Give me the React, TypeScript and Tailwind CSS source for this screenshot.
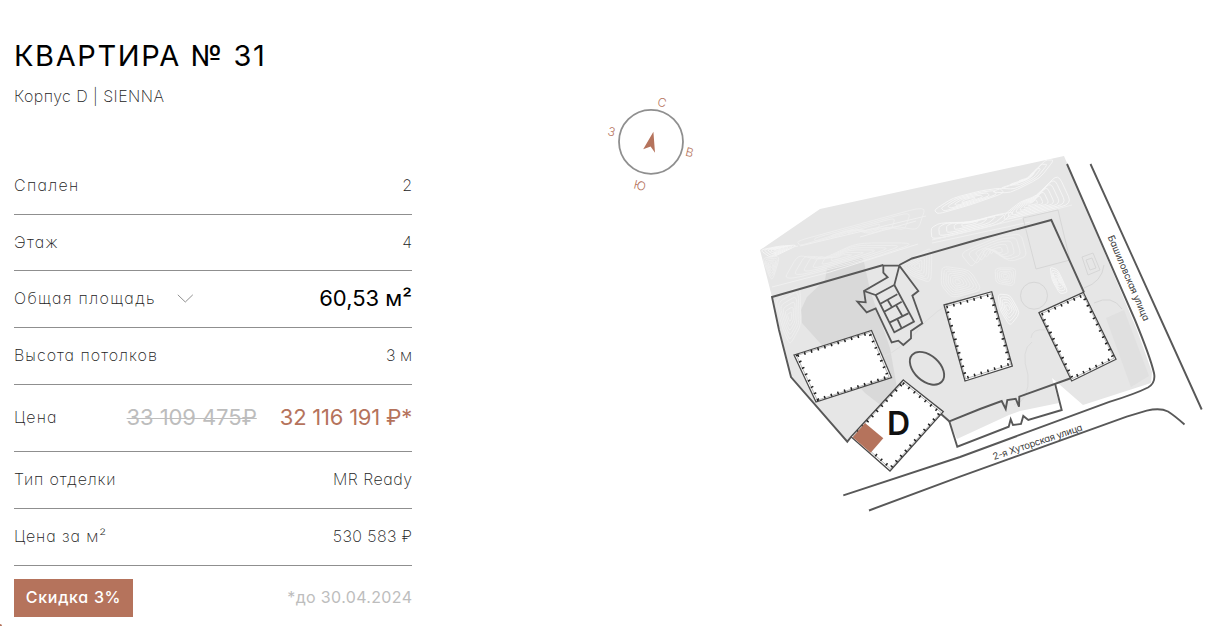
import type { ReactNode } from "react";

type Point = [number, number];

interface Row {
  label: ReactNode;
  value: ReactNode;
  height: string;
}

const rows: Row[] = [
  {
    label: <span className="tracking-[1.3px]">Спален</span>,
    value: <span>2</span>,
    height: "h-[57px]",
  },
  {
    label: <span className="tracking-[1.3px]">Этаж</span>,
    value: <span>4</span>,
    height: "h-14",
  },
  {
    label: (
      <button className="flex items-center gap-[21px]">
        <span className="tracking-[1.35px]">Общая площадь</span>
        <svg width="17" height="9" viewBox="0 0 17 9" fill="none">
          <path d="M0.8 0.8 8.3 8 15.8 0.8" stroke="#8f8f8f" />
        </svg>
      </button>
    ),
    value: <span className="text-[22px] font-normal text-black">60,53 м²</span>,
    height: "h-[57px]",
  },
  {
    label: <span className="tracking-[1px]">Высота потолков</span>,
    value: <span>3 м</span>,
    height: "h-[57px]",
  },
  {
    label: <span className="tracking-[1.2px]">Цена</span>,
    value: (
      <span className="flex text-[22px] font-normal">
        <s className="mr-[23px] tracking-[-0.1px] text-[#bdbdbd] decoration-1">33 109 475₽</s>
        <span className="tracking-[-0.22px] text-[#b5735c]">32 116 191 ₽*</span>
      </span>
    ),
    height: "h-[67px]",
  },
  {
    label: <span className="tracking-[0.85px]">Тип отделки</span>,
    value: <span className="-mr-[0.5px] tracking-[0.5px]">MR Ready</span>,
    height: "h-[57px]",
  },
  {
    label: <span className="tracking-[0.9px]">Цена за м²</span>,
    value: <span className="-mr-[0.4px] tracking-[0.4px]">530 583 ₽</span>,
    height: "h-[57px]",
  },
];

const buildings: Point[][] = [
  [[794, 355], [871.5, 330.5], [891.5, 377.5], [816, 402]],
  [[944, 305], [991.7, 291.7], [1012.3, 366], [965, 381]],
  [[1039, 312.7], [1083.3, 292.3], [1116, 359.3], [1071.7, 381]],
  [[903.3, 380], [943.3, 411.7], [890, 471], [851, 436.7]],
];

const contours: { points: Point[]; steps: number; bright?: boolean }[] = [
  { points: [[760, 250], [780, 246], [798, 245], [771, 258]], steps: 5, bright: true },
  { points: [[762, 258], [780, 256], [772, 282]], steps: 5 },
  { points: [[797, 241], [860, 224], [926, 206], [918, 230], [893, 226], [870, 234], [852, 229], [800, 246]], steps: 4 },
  { points: [[783, 281], [798, 255], [820, 260], [857, 243], [916, 243], [866, 260]], steps: 6 },
  { points: [[934, 210], [953, 198], [980, 191], [1000, 188], [1004, 193], [970, 205], [938, 214]], steps: 5, bright: true },
  { points: [[990, 192], [1028, 180], [1045, 160], [1054, 160], [1040, 178], [1010, 193]], steps: 4, bright: true },
  { points: [[931, 228], [940, 223], [970, 222], [1000, 214], [1014, 212], [1000, 224], [932, 240]], steps: 5, bright: true },
  { points: [[1005, 214], [1020, 202], [1036, 196], [1058, 174], [1072, 204], [1030, 214], [1004, 220]], steps: 7, bright: true },
  { points: [[898, 266], [912, 258], [932, 247], [931, 283], [912, 276]], steps: 6 },
  { points: [[942, 266], [970, 270], [982, 290], [952, 298], [941, 285]], steps: 7 },
  { points: [[960, 253], [1000, 236], [1021, 234], [1027, 256], [1010, 262], [985, 246], [972, 268]], steps: 5 },
  { points: [[995, 268], [1016, 268], [1014, 286], [996, 283]], steps: 5 },
  { points: [[998, 294], [1010, 295], [1020, 313], [1010, 326], [1000, 310]], steps: 5, bright: true },
  { points: [[1050, 267], [1058, 270], [1068, 292], [1060, 294], [1052, 280]], steps: 5, bright: true },
  { points: [[775, 300], [800, 285], [801, 325], [790, 345], [783, 330]], steps: 6 },
];

const toPath = (points: Point[]) => points.map((p) => p.join(",")).join(" ");

const middle = (a: Point, b: Point): Point => [(a[0] + b[0]) / 2, (a[1] + b[1]) / 2];

const center = (points: Point[]): Point => [
  points.reduce((sum, p) => sum + p[0], 0) / points.length,
  points.reduce((sum, p) => sum + p[1], 0) / points.length,
];

const scale = (points: Point[], k: number): Point[] => {
  const [cx, cy] = center(points);
  return points.map(([x, y]) => [cx + (x - cx) * k, cy + (y - cy) * k]);
};

// closed outline with slightly rounded corners
const softPath = (points: Point[]) => {
  const parts = points.map((p, i) => {
    const prev = points[(i + points.length - 1) % points.length];
    const next = points[(i + 1) % points.length];
    const from = middle(p, middle(p, prev));
    const to = middle(p, middle(p, next));
    return `${i === 0 ? "M" : "L"}${from.join(" ")}Q${p.join(" ")} ${to.join(" ")}`;
  });
  return parts.join("") + "Z";
};

const Contour = ({ points, steps, bright }: { points: Point[]; steps: number; bright?: boolean }) => (
  <g fill="none" stroke={bright ? "#f6f6f6" : "#eeeeee"} strokeWidth="0.9" strokeLinejoin="round">
    {Array.from({ length: steps }, (_, i) => (
      <path key={i} d={softPath(scale(points, 1 - i / steps))} />
    ))}
  </g>
);

const Building = ({ points }: { points: Point[] }) => (
  <g strokeLinejoin="miter">
    <polygon points={toPath(points)} fill="#fff" stroke="#4a4a4a" strokeWidth="1.3" />
    <polygon points={toPath(scale(points, 0.95))} fill="none" stroke="#888" strokeWidth="0.6" />
    <polygon
      points={toPath(scale(points, 0.93))}
      fill="none"
      stroke="#222"
      strokeWidth="2.8"
      strokeDasharray="1.5 5.5"
    />
  </g>
);

const Compass = () => (
  <g>
    <circle cx="651" cy="141.8" r="32" fill="none" stroke="#8f8f8f" strokeWidth="1.8" />
    <path d="M653.4 131.7 655 152.7 650.6 146.4 643.2 149.3Z" fill="#b5735c" />
    <g fill="#b5735c" fontSize="12" fontWeight="300" textAnchor="middle">
      <text transform="translate(661 106.6) rotate(14)">С</text>
      <text transform="translate(610.5 136) rotate(14)">З</text>
      <text transform="translate(688.5 156.5) rotate(14)">В</text>
      <text transform="translate(638.8 189.8) rotate(14)">Ю</text>
    </g>
  </g>
);

const SitePlan = () => (
  <svg
    width="632"
    height="626"
    viewBox="600 0 632 626"
    className="block shrink-0"
    fontFamily="Inter, 'Liberation Sans', sans-serif"
  >
    <Compass />

    {/* territory */}
    <path
      d="M760 250 820 209 1064 156 1067 163 1137 330 1152 372 1151 383 1083 405 1052 378 1059 403 1020 411 1009 415 957 439 949 421 941 414 903 381 847 441 791 377 772 297Z"
      fill="#e6e6e6"
    />
    <path
      d="M827 268 862 257 864 262 870 290 890 348 897 388 883 407 865 393 802 323 801 310 807 297 825 280Z"
      fill="#d9d9d9"
    />
    {contours.map((contour, i) => (
      <Contour key={i} {...contour} />
    ))}
    <g fill="none" stroke="#f0f0f0" strokeWidth="1">
      <path d="M772 287 830 272 918 244M932 240 1023 218 1072 205M932 243 1030 222M800 246 926 216" />
      <path d="M860 237 916 221M770 252 798 246" />
    </g>
    <g fill="none" stroke="#d6d6d6" strokeWidth="1">
      <circle cx="1034" cy="295.7" r="13.5" />
      <path d="M1023 218 1058 210 1070 260 1036 269Z" />
      <path d="M1082 257 1093 253 1100 270 1088 275ZM1086 260 1092 258 1096 268 1090 270Z" />
      <path d="M1104 265Q1102 282 1084 288M1094 303Q1112 294 1122 309" />
      <path d="M880 358Q903 350 925 322 950 298 980 292" stroke="#dedede" />
      <path d="M1031 338Q1032 328 1046 330M1014 405Q1030 400 1028 375 1020 350 1032 342" stroke="#dcdcdc" />
    </g>
    <path d="M1106 318 1124 310 1149 376 1131 387Z" fill="#e0e0e0" />

    {/* roads */}
    <g fill="none" stroke="#585858" strokeWidth="1.9">
      <path d="M1067 164 1135 320C1142 337 1151 360 1154 373Q1156 383 1148 387.5C1135 394 1122 398 1110 401.7L960 457 843.3 495.3" />
      <path d="M1090.5 164 1165.7 330 1201.7 409.5" />
      <path d="M869 510.5 960 476.7 1126.7 416.7 1146.7 410.7Q1160 407.5 1168 411.5 1175 416 1184.5 424.5" />
    </g>

    {/* site border */}
    <g fill="none" stroke="#585858" strokeWidth="1.9">
      <path d="M883.3 265 772 297 779 330 791 377 847.3 441.7 851 437M899.3 265 912 258.5 980 239 1051.3 220 1084 292.5" />
      <path d="M941 414 949.3 421.3 980 409 1001.7 401 1005.7 409 1007.3 400 1015.7 398.7 1019 406.7 1019.3 396.7 1070 378.5" />
      <path d="M949.3 421.3 957.3 446.7 1008.7 426.7 1010.7 419.3 1013 425 1021 424 1023.3 416 1028.3 420 1061.7 410 1055 383.5" />
      <ellipse cx="927" cy="368.3" rx="20" ry="12.8" transform="rotate(42 927 368.3)" />
    </g>

    {/* pavilion */}
    <g transform="translate(840 250) scale(0.33333)" fill="none" stroke="#585858" strokeWidth="5.4">
      <path d="M178 47H130V68L143 82 72 123 77 157 52 155 80 187 107 175 155 277 175 272 190 285 213 265V243L247 220 217 137 235 123ZL163 105 107 135 72 123" />
      <path d="M107 135 163 247 222 215 163 105M120 162 172 133M130 187 185 155M150 217 205 190M143 150 155 170M168 165 187 198M172 207 185 235" />
    </g>

    {buildings.map((points, i) => (
      <Building key={i} points={points} />
    ))}

    <path d="M865 423 883.3 438.3 870.7 452.7 852.7 437.3Z" fill="#b5735c" />
    <text x="898.6" y="435" fontSize="32" fontWeight="600" textAnchor="middle" fill="#111">
      D
    </text>

    <g fill="#3c3c3c" fontSize="9.5" fontWeight="400">
      <text transform="translate(994 460) rotate(-18.5)" textLength="94">
        2-я Хуторская улица
      </text>
      <text transform="translate(1107.5 237) rotate(66.8)" textLength="92">
        Башиловская улица
      </text>
    </g>
  </svg>
);

export default function App() {
  return (
    <div className="relative flex h-[626px] w-[1232px] overflow-hidden bg-white font-['Inter','Liberation_Sans',sans-serif] [font-feature-settings:'cv11']">
      <section className="mr-[188px] ml-3.5 w-[398px] shrink-0 text-base font-extralight text-[#222]">
        <h1 className="pt-9 text-[29px] leading-10 font-normal tracking-[1.6px] whitespace-nowrap text-black">
          КВАРТИРА № 31
        </h1>
        <p className="pt-2 leading-6 tracking-[0.45px]">Корпус D | SIENNA</p>

        <div className="mt-[50px]">
          {rows.map((row, i) => (
            <div
              key={i}
              className={`flex items-center justify-between border-b border-[#8f8f8f] pb-0.5 whitespace-nowrap ${row.height}`}
            >
              {row.label}
              {row.value}
            </div>
          ))}
        </div>

        <div className="mt-[13px] flex h-[38px] items-center justify-between">
          <span className="flex h-full w-[119px] items-center justify-center bg-[#b5735c] pb-0.5 font-medium tracking-[0.7px] text-white">
            Скидка 3%
          </span>
          <span className="-mr-[0.35px] pb-0.5 font-normal tracking-[0.35px] text-[#bdbdbd]">*до 30.04.2024</span>
        </div>
      </section>

      <SitePlan />

      <span className="absolute bottom-0 left-0 size-0.5 rounded-tr-full bg-[#b5735c]" />
    </div>
  );
}
